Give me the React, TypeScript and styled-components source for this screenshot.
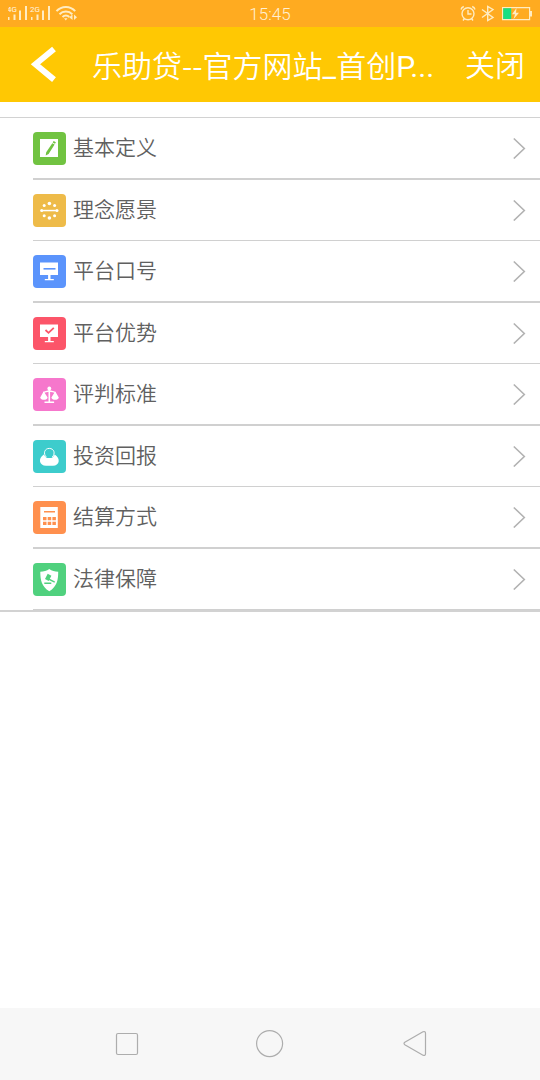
import React from 'react';
import styled, { createGlobalStyle } from 'styled-components';

const GlobalStyle = createGlobalStyle`
  * { box-sizing: border-box; }
  body {
    margin: 0;
    background: #fff;
    font-family: "Noto Sans CJK SC", Roboto, sans-serif;
  }
`;

const Screen = styled.div`
  display: flex;
  flex-direction: column;
  min-height: 100vh;
`;

const StatusBar = styled.div`
  display: grid;
  grid-template-columns: 1fr auto 1fr;
  align-items: center;
  height: 27px;
  padding: 0 8px;
  background: #ffab20;
  color: #ffecc2;
`;

const StatusGroup = styled.div<{ $end?: boolean }>`
  display: flex;
  justify-content: ${(p) => (p.$end ? 'flex-end' : 'flex-start')};
`;

const Clock = styled.time`
  padding-top: 2px;
  font: 300 17px/25px Roboto, sans-serif;
  color: #fff0d4;
`;

const Drawing = styled.svg`
  display: block;
  flex: none;
`;

const Header = styled.header`
  display: flex;
  align-items: center;
  height: 75px;
  padding: 0 15px 0 25px;
  background: #ffc803;
  color: #fff;
`;

const PlainButton = styled.button`
  display: flex;
  align-items: center;
  justify-content: center;
  padding: 0;
  border: 0;
  background: none;
  color: inherit;
  font-family: inherit;
  cursor: pointer;
`;

const BackButton = styled(PlainButton)`
  width: 38px;
  height: 48px;
`;

const Title = styled.h1`
  flex: 1;
  min-width: 0;
  margin: 0;
  padding: 0 0 2px 29px;
  font-size: 30px;
  font-weight: 350;
  line-height: 44px;
  white-space: nowrap;
  overflow: hidden;
`;

const Latin = styled.span`
  font-family: Roboto, sans-serif;
  font-weight: 400;
  line-height: 30px;
`;

const CloseButton = styled(PlainButton)`
  padding-bottom: 4px;
  font-size: 30px;
  font-weight: 350;
  line-height: 44px;
`;

const Content = styled.main`
  flex: 1;
  padding: 15px 0;
`;

const List = styled.ul`
  margin: 0;
  padding: 0;
  list-style: none;
  border-top: 1px solid #d2d2d2;
  border-bottom: 2px solid #d2d2d2;
`;

const Item = styled.li`
  margin-left: 33px;
  border-bottom: 1px solid #d0d0d0;

  &:nth-child(odd) {
    border-bottom-width: 2px;
  }
`;

const ItemLink = styled.a`
  display: flex;
  align-items: center;
  height: 60px;
  padding-right: 14px;
  color: #606060;
  text-decoration: none;
`;

const Tile = styled.span<{ $color: string }>`
  flex: none;
  width: 33px;
  height: 33px;
  border-radius: 4px;
  background: ${(p) => p.$color};
  color: ${(p) => p.$color};
`;

const Label = styled.span`
  flex: 1;
  padding: 0 0 5px 7px;
  font-size: 21px;
  font-weight: 350;
  line-height: 30px;
`;

const NavBar = styled.nav`
  display: grid;
  grid-template-columns: repeat(3, 1fr);
  height: 72px;
  padding: 0 10%;
  background: #f7f7f7;
  color: #adadad;
`;

const board = (
  <path fill="#fff" d="M7 7.500h18v12.500h-7.500v4h3.300v1.300h-9v-1.300h3.300v-4H7z" />
);

const items: { label: string; color: string; icon: React.ReactNode }[] = [
  {
    label: '基本定义',
    color: '#71c341',
    icon: (
      <>
        <path fill="#fff" d="M7 7h18v18H7z" />
        <path fill="currentColor" d="M20.600 9l2.300 1.300-.9 1.500-2.300-1.300zM19.300 11.200l2.300 1.300-6 9.400-2.900 1.600.5-3.200z" />
      </>
    ),
  },
  {
    label: '理念愿景',
    color: '#eebb49',
    icon: (
      <g fill="#fff">
        <path d="M9 15.800h15v1.500H9z" />
        <circle cx="8.700" cy="16.500" r="1.500" />
        <circle cx="24" cy="16.500" r="1.500" />
        <circle cx="16.400" cy="9.500" r="1.800" />
        <circle cx="16.400" cy="24" r="1.800" />
        <circle cx="11.200" cy="11.500" r="1.500" />
        <circle cx="21.600" cy="11.500" r="1.500" />
        <circle cx="11.200" cy="21.800" r="1.500" />
        <circle cx="21.600" cy="21.800" r="1.500" />
      </g>
    ),
  },
  {
    label: '平台口号',
    color: '#5b94fc',
    icon: (
      <>
        {board}
        <path fill="currentColor" d="M10.500 13h12v1.600h-12z" />
      </>
    ),
  },
  {
    label: '平台优势',
    color: '#fc5569',
    icon: (
      <>
        {board}
        <path fill="none" stroke="currentColor" strokeWidth="1.800" d="M12.500 13l3 2.800 5.300-5" />
      </>
    ),
  },
  {
    label: '评判标准',
    color: '#f677cc',
    icon: (
      <g fill="#fff">
        <circle cx="16.300" cy="10.400" r="1.900" />
        <path d="M15.500 11h1.600v12.500h4v1.500h-9.600v-1.500h4z" />
        <path fill="none" stroke="#fff" strokeWidth="1.300" d="M10 14.300c3-.5 4-1.300 6.300-1.300s3.500.8 6.300 1.300" />
        <path d="M10.300 14h.8l3.500 5.500c-.3 3.100-7 3.100-7.400 0zM21.800 14h.8l3.200 5.500c-.4 3.100-7 3.100-7.400 0z" />
      </g>
    ),
  },
  {
    label: '投资回报',
    color: '#3dcccc',
    icon: (
      <>
        <path fill="#fff" d="M10.800 14.500C4.500 18.500 6.500 25.800 13 25.800h7c6.500 0 8-7.300 1.800-11.300-.8 1.500-1.800 2.800-3 3.400h-5c-1.200-.6-2.200-1.900-3-3.400z" />
        <path fill="none" stroke="#fff" strokeWidth="1" d="M13.400 17.200c-3.600-3.700-1.800-8.800 2.900-8.800s6.500 5.100 2.900 8.800" />
      </>
    ),
  },
  {
    label: '结算方式',
    color: '#ff904e',
    icon: (
      <>
        <path fill="#fff" d="M7.300 6h17.500v21H7.300z" />
        <path fill="currentColor" d="M11 10h11v1.600H11zM10 16h3.500v3.300H10zM14.700 16h3.500v3.300h-3.500zM19.400 16h3.500v3.300h-3.500zM10 20.700h3.500V24H10zM14.700 20.700h3.500V24h-3.500zM19.400 20.700h3.500V24h-3.500z" />
      </>
    ),
  },
  {
    label: '法律保障',
    color: '#50d17e',
    icon: (
      <>
        <path fill="#fff" d="M16.300 6c2.600 2 5.300 2.700 8.900 2.700 0 8.300-1 14.500-8.900 19.600C8.500 23.200 7.300 17 7.300 8.700c3.400 0 6.400-.7 9-2.700z" />
        <path fill="currentColor" d="M14.700 10.700l3.700 2-2.700 5.300-3.700-2zM16.700 15.700l5.300 2.800-.6 1.300-5.500-2.700zM11.300 19.500h7v1.400h-7z" />
      </>
    ),
  },
];

const Bars = ({ x }: { x: number }) => (
  <path fill="currentColor" d={`M${x} 17h1.500v3H${x}zM${x + 5.5} 14.500h2v5.500h-2zM${x + 11} 10.500h2v9.500h-2zM${x + 17} 6h2v14h-2z`} />
);

export default function App() {
  return (
    <Screen>
      <GlobalStyle />
      <StatusBar>
        <StatusGroup>
          <Drawing width="70" height="27" viewBox="0 0 70 27" aria-label="信号">
            <g fill="#fff6e0" fontFamily="Roboto, sans-serif" fontSize="8">
              <text x="-1" y="12">4G</text>
              <text x="22" y="12">2G</text>
            </g>
            <Bars x={0} />
            <Bars x={23} />
            <g fill="none" stroke="currentColor" strokeWidth="2">
              <path d="M48.500 11.200c5-5.600 13.700-5.600 18.700 0M51.500 14.200c3.500-3.700 9.300-3.700 12.800 0M54.500 17c2-2 4.800-2 6.800 0" />
            </g>
            <path fill="currentColor" d="M56 18.200h3.500l-1.700 2.200zM64.500 14.500v5.500l-3.300-2.700zM66 14.500v5.500l3-2.700z" />
          </Drawing>
        </StatusGroup>
        <Clock>15:45</Clock>
        <StatusGroup $end>
          <Drawing width="72" height="27" viewBox="460 0 72 27" aria-label="闹钟、蓝牙、电池">
            <g fill="none" stroke="currentColor" strokeWidth="1.400">
              <circle cx="468" cy="13.800" r="6" />
              <path d="M468 10v4h3.500M461 9.500c.4-1.600 1.300-2.500 2.800-3M475 9.500c-.4-1.600-1.300-2.500-2.800-3M464.500 18.500l-1.500 2M471.500 18.500l1.500 2" />
              <path d="M482 9.500l11 8-5.300 3V6.500l5.300 3-11 8" />
              <path strokeWidth="1.200" d="M502.600 7.600h27v12h-27z" />
            </g>
            <path fill="#19df83" d="M503.200 8.200h8v10.800h-8z" />
            <path fill="currentColor" d="M516.500 8l-4.500 6.300h3l-1.500 5 5.500-6.500h-3zM530 11h2v5.500h-2z" />
          </Drawing>
        </StatusGroup>
      </StatusBar>

      <Header>
        <BackButton type="button" aria-label="返回">
          <Drawing width="38" height="48" viewBox="0 0 38 48">
            <path fill="none" stroke="#fff" strokeWidth="6" d="M29 8L10.500 23.300 29 38.600" />
          </Drawing>
        </BackButton>
        <Title>乐助贷--官方网站<Latin>_</Latin>首创<Latin>P...</Latin></Title>
        <CloseButton type="button">关闭</CloseButton>
      </Header>

      <Content>
        <List>
          {items.map((item) => (
            <Item key={item.label}>
              <ItemLink href="#">
                <Tile $color={item.color}>
                  <Drawing width="33" height="33" viewBox="0 0 33 33" aria-hidden="true">
                    {item.icon}
                  </Drawing>
                </Tile>
                <Label>{item.label}</Label>
                <Drawing width="13" height="22" viewBox="0 0 13 22" aria-hidden="true">
                  <path fill="none" stroke="#b2b2b2" strokeWidth="1.600" d="M.8 1.500l10.500 10L.8 21.500" />
                </Drawing>
              </ItemLink>
            </Item>
          ))}
        </List>
      </Content>

      <NavBar aria-label="系统导航">
        <PlainButton type="button" aria-label="最近任务">
          <Drawing width="30" height="30" viewBox="0 0 30 30" fill="none" stroke="currentColor" strokeWidth="1.200">
            <rect x="5.500" y="4.500" width="21" height="21" rx="1.500" />
          </Drawing>
        </PlainButton>
        <PlainButton type="button" aria-label="主屏幕">
          <Drawing width="30" height="30" viewBox="0 0 30 30" fill="none" stroke="currentColor" strokeWidth="1.200">
            <circle cx="14.600" cy="14.600" r="13" />
          </Drawing>
        </PlainButton>
        <PlainButton type="button" aria-label="返回上一页">
          <Drawing width="30" height="30" viewBox="0 0 30 30" fill="none" stroke="currentColor" strokeWidth="1.200">
            <path d="M24 2.800L5.800 13.300q-1.600 1.200 0 2.400L24 26.200q2.500.8 2.500-1.500V4.300q0-2.300-2.500-1.500z" />
          </Drawing>
        </PlainButton>
      </NavBar>
    </Screen>
  );
}
